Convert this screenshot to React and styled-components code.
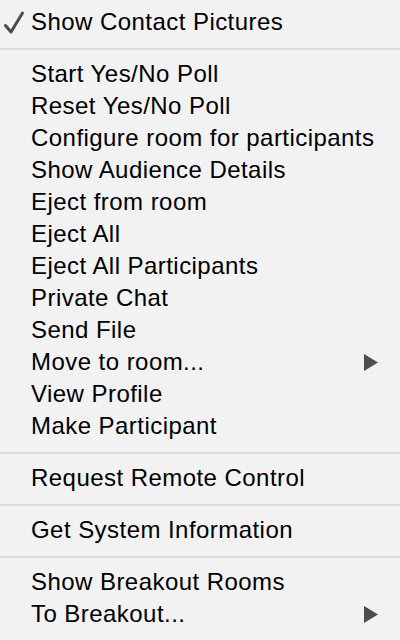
import styled, { createGlobalStyle } from 'styled-components';

const GlobalStyle = createGlobalStyle`
    html, body {
        margin: 0;
        padding: 0;
        background: #f2f2f2;
    }
`;

const groups = [
    [{ label: 'Show Contact Pictures', checked: true }],
    [
        { label: 'Start Yes/No Poll' },
        { label: 'Reset Yes/No Poll' },
        { label: 'Configure room for participants' },
        { label: 'Show Audience Details' },
        { label: 'Eject from room' },
        { label: 'Eject All' },
        { label: 'Eject All Participants' },
        { label: 'Private Chat' },
        { label: 'Send File' },
        { label: 'Move to room...', submenu: true },
        { label: 'View Profile' },
        { label: 'Make Participant' },
    ],
    [{ label: 'Request Remote Control' }],
    [{ label: 'Get System Information' }],
    [
        { label: 'Show Breakout Rooms' },
        { label: 'To Breakout...', submenu: true },
    ],
];

function CheckMark() {
    return (
        <svg width='26' height='26' viewBox='0 0 26 26'>
            <path
                d='M5.5 16.5 L11 23 L22.5 4'
                fill='none'
                stroke='#4a4a4a'
                strokeWidth='3'
                strokeLinecap='round'
                strokeLinejoin='round'
            />
        </svg>
    );
}

function SubArrow() {
    return (
        <svg width='14' height='17' viewBox='0 0 14 17'>
            <path d='M0 0 L14 8.5 L0 17 Z' fill='#4d4d4d' />
        </svg>
    );
}

export default function App() {
    return (
        <>
            <GlobalStyle />
            <Menu>
                {groups.map((group, gi) => (
                    <div key={gi}>
                        {gi > 0 && <Separator />}
                        {group.map((item) => (
                            <Item key={item.label}>
                                <CheckSlot>{item.checked && <CheckMark />}</CheckSlot>
                                <Label>{item.label}</Label>
                                {item.submenu && (
                                    <ArrowSlot>
                                        <SubArrow />
                                    </ArrowSlot>
                                )}
                            </Item>
                        ))}
                    </div>
                ))}
            </Menu>
        </>
    );
}

const Menu = styled.div`
    width: 400px;
    height: 640px;
    box-sizing: border-box;
    padding-top: 6px;
    background: #f2f2f2;
    font-family: 'Liberation Sans', Arial, sans-serif;
    overflow: hidden;
`;

const Item = styled.div`
    display: flex;
    align-items: center;
    height: 32px;
    color: #000;
    font-size: 24px;
    letter-spacing: 0.45px;
`;

const CheckSlot = styled.div`
    width: 31px;
    height: 32px;
    flex-shrink: 0;
    display: flex;
    align-items: center;
    justify-content: flex-start;
`;

const Label = styled.span`
    flex: 1;
    white-space: nowrap;
    line-height: 32px;
`;

const ArrowSlot = styled.div`
    display: flex;
    align-items: center;
    padding-right: 22px;
`;

const Separator = styled.div`
    height: 2px;
    margin: 10px 0 8px;
    background: #dadada;
`;
